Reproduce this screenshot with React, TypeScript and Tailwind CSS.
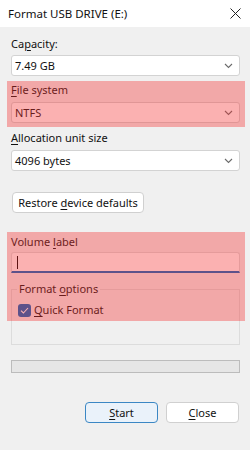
import React from "react";

function U({ children }: { children: React.ReactNode }) {
  return <span className="underline underline-offset-[2px] decoration-[1px]">{children}</span>;
}

function Combo({ value }: { value: string }) {
  return (
    <div className="h-[21px] bg-white border border-[#d3d3d3] rounded-[3px] flex items-center justify-between pl-[3px] pr-[6px]">
      <span className="leading-[16px]">{value}</span>
      <svg width="9" height="6" viewBox="0 0 9 6" fill="none">
        <polyline points="1,1 4.5,4.5 8,1" stroke="#6b6b6b" strokeWidth="1.1" />
      </svg>
    </div>
  );
}

function Btn({ children, primary, className }: { children: React.ReactNode; primary?: boolean; className?: string }) {
  return (
    <div
      className={
        "h-[21px] rounded-[4px] border flex items-center justify-center leading-[16px] " +
        (primary ? "bg-[#eaf2fa] border-[#3b87c4] " : "bg-white border-[#d0d0d0] ") +
        (className ?? "")
      }
    >
      <span>{children}</span>
    </div>
  );
}

export default function App() {
  return (
    <div className="w-[250px] h-[450px] overflow-hidden bg-[#f0f0f0] text-[11px] leading-[16px] text-[#111] font-['Segoe_UI','Noto_Sans',sans-serif]">
      {/* title bar */}
      <div className="h-[27px] bg-white flex items-center justify-between pl-[8px] pr-[9px]">
        <span className="text-[11.5px]">Format USB DRIVE (E:)</span>
        <svg width="11" height="11" viewBox="0 0 11 11" fill="none">
          <path d="M0.5 0.5 L10.5 10.5 M10.5 0.5 L0.5 10.5" stroke="#222" strokeWidth="1" />
        </svg>
      </div>

      <div className="pl-[11px] pr-[10px]">
        <div className="mt-[9px]">
          Ca<U>p</U>acity:
        </div>
        <div className="mt-[3px]">
          <Combo value="7.49 GB" />
        </div>

        {/* highlighted: file system */}
        <div className="relative mt-[5px] -ml-[4px] -mr-[5px] pl-[4px] pr-[5px] pt-[1px] pb-[4px]">
          <div>
            <U>F</U>ile system
          </div>
          <div className="mt-[4px]">
            <Combo value="NTFS" />
          </div>
          <div className="absolute inset-0 bg-[rgba(245,50,50,0.38)] pointer-events-none" />
        </div>

        <div className="mt-[3px]">
          <U>A</U>llocation unit size
        </div>
        <div className="mt-[4px]">
          <Combo value="4096 bytes" />
        </div>

        <Btn className="mt-[21px] ml-[1px] w-[132px]">
          Restore <U>d</U>evice defaults
        </Btn>

        {/* highlighted: volume label + part of format options */}
        <div className="relative mt-[19px] pt-[2px]">
          <div>
            Volume <U>l</U>abel
          </div>
          <div className="mt-[2px] h-[21px] bg-white border border-[#dcdcdc] border-b-[2px] border-b-[#0067c0] rounded-t-[3px] flex items-center pl-[5px]">
            <div className="w-[1px] h-[13px] bg-black" />
          </div>

          <fieldset className="mt-[8px] border border-[#dcdcdc] pb-[26px]">
            <legend className="ml-[5px] px-[2px]">
              Format <U>o</U>ptions
            </legend>
            <div className="mt-[5px] pl-[6px] flex items-center gap-[3px]">
              <div className="w-[13px] h-[13px] rounded-[3px] bg-[#0067c0] flex items-center justify-center">
                <svg width="9" height="7" viewBox="0 0 9 7" fill="none">
                  <polyline points="1,3.6 3.4,6 8,1" stroke="white" strokeWidth="1.1" />
                </svg>
              </div>
              <span>
                <U>Q</U>uick Format
              </span>
            </div>
          </fieldset>

          <div className="absolute left-[-4px] right-[-5px] top-0 h-[89px] bg-[rgba(245,50,50,0.38)] pointer-events-none" />
        </div>

        <div className="mt-[15px] h-[13px] bg-[#e6e6e6] border border-[#bcbcbc]" />

        <div className="mt-[29px] flex justify-end gap-[8px] mr-[1px]">
          <Btn primary className="w-[73px]">
            <U>S</U>tart
          </Btn>
          <Btn className="w-[73px]">
            <U>C</U>lose
          </Btn>
        </div>
      </div>
    </div>
  );
}
